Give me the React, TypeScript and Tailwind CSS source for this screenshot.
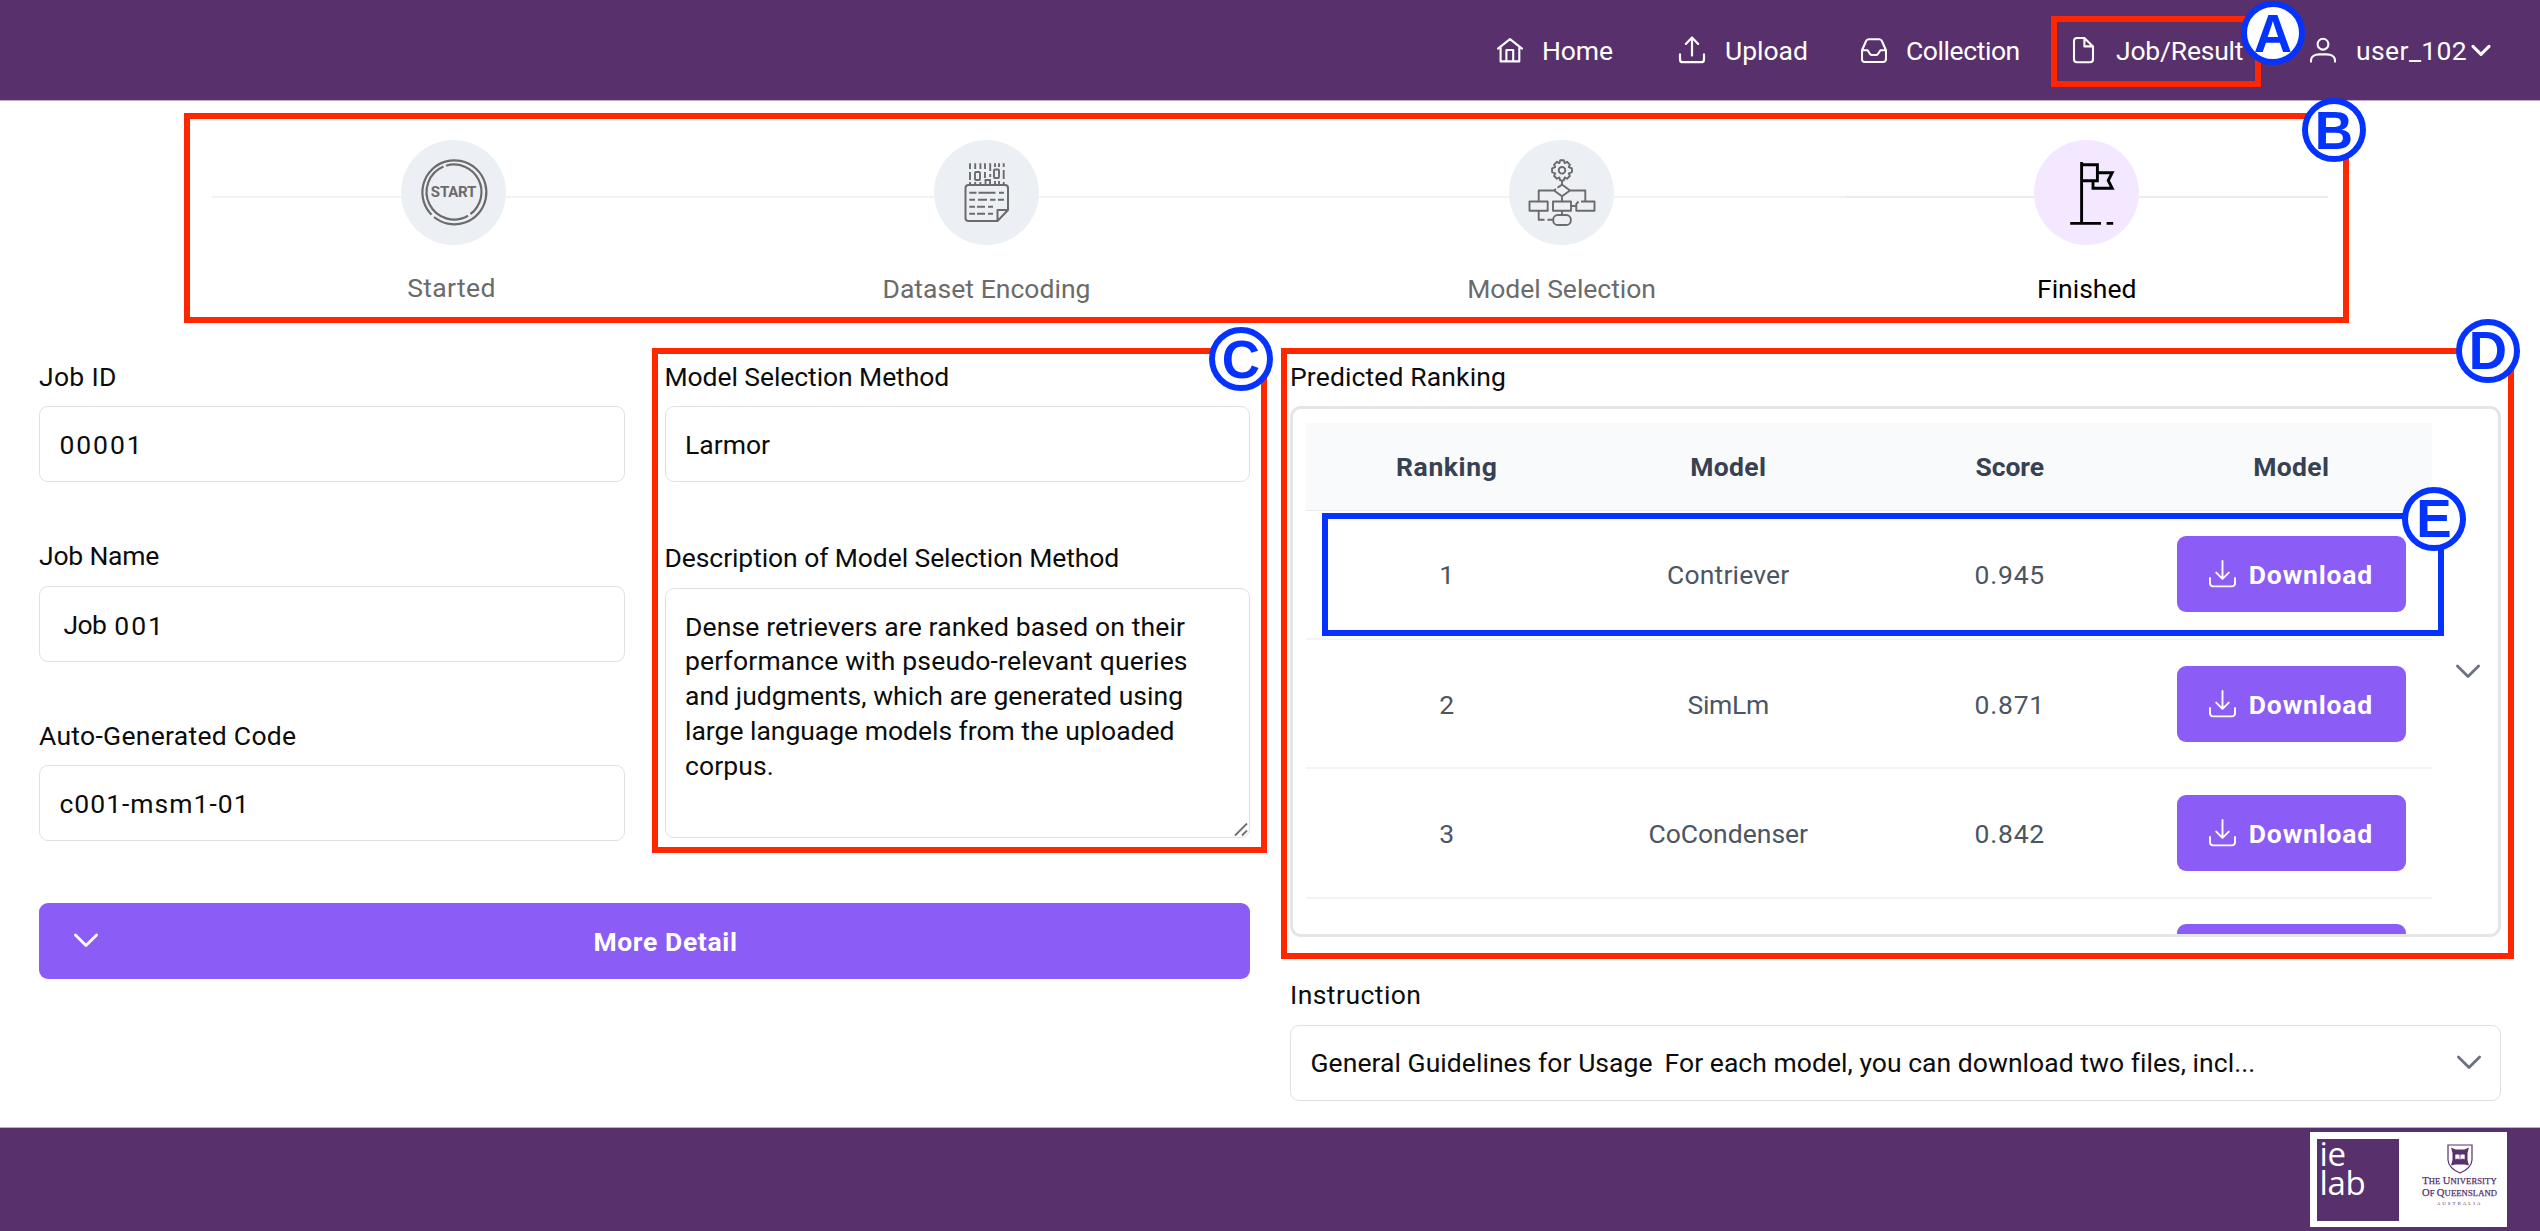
import React from 'react';

/* ---------- icons ---------- */

const HomeIcon = () => (
  <svg className="size-[26px]" viewBox="0 0 26 26" fill="none" stroke="currentColor" strokeWidth="2.1" strokeLinejoin="round" strokeLinecap="round">
    <path d="M1 11.6 13 2.2 25 11.6M3.6 9.8V24.4H22.3V9.8M9.4 24.2V13H16.2V24.2" />
  </svg>
);

const UploadIcon = () => (
  <svg className="size-[26px] overflow-visible" viewBox="0 0 26 26" fill="none" stroke="currentColor" strokeWidth="2.2" strokeLinejoin="round" strokeLinecap="round">
    <path d="M13 18.6V.6M6.8 6.9 13 .6 19.2 6.9M1 17.4V22.4A2.8 2.8 0 0 0 3.8 25.2H22.2A2.8 2.8 0 0 0 25 22.4V17.4" />
  </svg>
);

const InboxIcon = () => (
  <svg className="size-[26px]" viewBox="0 0 26 26" fill="none" stroke="currentColor" strokeWidth="2.1" strokeLinejoin="round" strokeLinecap="round">
    <path d="M1 13.2 5 4.2Q5.8 2.2 7.8 2.2H18.2Q20.2 2.2 21 4.2L25 13.2V22Q25 25 22 25H4Q1 25 1 22ZM1 13.2H6.6L9.2 17.2Q9.8 18 10.8 18H15.2Q16.2 18 16.8 17.2L19.4 13.2H25" />
  </svg>
);

const FileIcon = () => (
  <svg className="size-[26px] overflow-visible" viewBox="0 0 26 26" fill="none" stroke="currentColor" strokeWidth="2.1" strokeLinejoin="round" strokeLinecap="round">
    <path d="M14.4 1H7Q4 1 4 4V22.2Q4 25.2 7 25.2H20Q23 25.2 23 22.2V9.4ZM14.4 1V9.4H23" />
  </svg>
);

const UserIcon = () => (
  <svg className="size-[26px]" viewBox="0 0 26 26" fill="none" stroke="currentColor" strokeWidth="2.1" strokeLinejoin="round" strokeLinecap="round">
    <circle cx="13" cy="7.2" r="5.4" />
    <path d="M1 24.6V23.4C1 19.4 4.8 17.4 9.4 17.4H16.6C21.2 17.4 25 19.4 25 23.4V24.6" />
  </svg>
);

const DownloadIcon = () => (
  <svg className="h-[28px] w-[27px] shrink-0" viewBox="0 0 27 28" fill="none" stroke="currentColor" strokeWidth="1.9" strokeLinejoin="round" strokeLinecap="round">
    <path d="M13.5 1V18.6M7.2 12.6 13.5 18.9 19.8 12.6M1 18V23.4A3 3 0 0 0 4 26.4H23A3 3 0 0 0 26 23.4V18" />
  </svg>
);

const Chevron = () => (
  <svg className="h-[15px] w-[26px]" viewBox="0 0 26 15" fill="none" stroke="currentColor" strokeWidth="2.8" strokeLinejoin="round" strokeLinecap="round">
    <path d="M2.4 2 13 12.600 23.600 2" />
  </svg>
);

const StartIcon = () => (
  <span className="relative flex size-[70px] items-center justify-center">
    <svg className="absolute inset-0" viewBox="-35 -35 70 70" fill="none" stroke="currentColor" strokeWidth="2.2">
      <path d="M-22.5 22.7A32 32 0 1 1 -20 25" />
      <path d="M-8 -26.3A27.5 27.5 0 0 1 16.5 22M14 23.7A27.5 27.5 0 1 1 -10.5 -25.4" />
    </svg>
    <span className="text-[15px] leading-none font-bold tracking-[-0.2px]">START</span>
  </span>
);

const DatasetIcon = () => (
  <svg className="size-[70px]" viewBox="-35 -35 70 70" fill="none" stroke="currentColor" strokeWidth="2">
    <path d="M10.5 29H-18.5Q-21.5 29 -21.5 26V-4Q-21.5 -7 -18.5 -7H18Q21 -7 21 -4V18ZM10.5 29V18H21" strokeLinejoin="round" />
    <path d="M-17.7 .7H-10.5M-8.5 .7H8.5M12 .7H17M-17.7 7.7H-12M-9 7.7H0M3 7.7H8.5M11 7.7H17M-17.7 14.7H-12M-10 14.7H-2M1 14.7H6M-17.7 21.7H-12M-10 21.7H-2M1 21.7H6" />
    <path d="M-17 -28.7V-23M-11.8 -28.7V-23M-6.6 -28.7V-23M-2 -28.7V-23M3.2 -28.7V-21M8 -28.7V-25M12 -28.7V-25M16.7 -28.7V-25M-17 -20V-12M-2 -20V-14M3.2 -18V-15M16.7 -22V-13M-17 -10V-7M-11.8 -10V-7M-6.6 -10V-7M8 -11V-7M12 -11V-7M16.7 -10V-7" strokeWidth="1.9" />
    <rect x="-12" y="-20" width="5" height="8" rx="1" strokeWidth="1.9" />
    <rect x="7" y="-22.5" width="5" height="8.5" rx="1" strokeWidth="1.9" />
    <path d="M-1.5 -7V-12H3V-7" strokeWidth="1.9" />
  </svg>
);

const ModelIcon = () => (
  <svg className="size-[70px]" viewBox="-35 -35 70 70" fill="none" stroke="currentColor" strokeWidth="1.9" strokeLinejoin="round">
    <path d="M-1.8 -31.8H1.8L2.6 -28.9 5 -30.2 7.9 -27.4 6.8 -24.8 9.9 -23.6V-19.8L6.8 -18.7 7.9 -16 5 -13.2 2.6 -14.6 1.8 -11.6H-1.8L-2.6 -14.6 -5 -13.2 -7.9 -16 -6.8 -18.7 -9.9 -19.8V-23.6L-6.8 -24.8 -7.9 -27.4 -5 -30.2 -2.6 -28.9Z" />
    <circle cx="0" cy="-21.7" r="3.3" />
    <path d="M0 -11.6V-6.6M-4.5 -4.3 0 -7.4 8 -1.5 0 4.3 -8 -1.5 -6 -3M-8 -1.5H-23.3V9.5M8 -1.5H23.3V9.5M0 4.3V9.5M0 18.7V23M9 14H14M-23.3 18.7V27.8H-17.5M-14.5 27.8H-9" />
    <rect x="-32.5" y="9.5" width="18.2" height="9.2" />
    <rect x="-9" y="9.5" width="18" height="9.2" />
    <path d="M19 9.5H32.5V18.7H14.3V12L16.5 9.5" />
    <rect x="-8.8" y="23" width="17.6" height="10" rx="4.6" />
  </svg>
);

const FlagIcon = () => (
  <svg className="size-[70px]" viewBox="-35 -35 70 70" fill="none" stroke="currentColor" strokeWidth="2.9">
    <path d="M-5.4 -30V31.4M-16.8 31.4H14M19.6 31.4H26.2M-5.4 -27.3H10.4V-11.3H-5.4M10.4 -19.3H25.2L21.2 -11.5 25.2 -3.7H6V-11.3" />
  </svg>
);

/* ---------- data ---------- */

const steps = [
  { label: 'Started', icon: <StartIcon />, width: 'w-[484px]', text: 'tracking-[0.35px] -translate-y-px -translate-x-[2px]' },
  { label: 'Dataset Encoding', icon: <DatasetIcon />, width: 'w-[582px]', text: 'tracking-[0.04px]' },
  { label: 'Model Selection', icon: <ModelIcon />, width: 'w-[568px]', text: 'tracking-[-0.04px]' },
  { label: 'Finished', icon: <FlagIcon />, width: 'w-[482.5px]', text: '', active: true },
];

const rows = [
  { rank: '1', model: 'Contriever', score: '0.945', tracking: 'tracking-[0.19px]' },
  { rank: '2', model: 'SimLm', score: '0.871', tracking: 'tracking-[-0.3px]' },
  { rank: '3', model: 'CoCondenser', score: '0.842', tracking: 'tracking-normal' },
  { rank: '4', model: '', score: '', tracking: '' },
];

/* ---------- building blocks ---------- */

const fieldBox = 'h-[76px] rounded-[9px] border-[1.5px] border-[#e0e1e3] bg-white flex items-center';

function Label({ children, className = '' }: { children: React.ReactNode; className?: string }) {
  return <div className={`h-[35px] leading-[33px] whitespace-nowrap ${className}`}>{children}</div>;
}

function Field({ label, labelClass, children }: { label: string; labelClass?: string; children: React.ReactNode }) {
  return (
    <div>
      <Label className={labelClass}>{label}</Label>
      <div className={`${fieldBox} mt-[11.5px] px-[19.5px]`}>{children}</div>
    </div>
  );
}

function Circle({ letter, className }: { letter: string; className: string }) {
  return (
    <div className={`absolute flex size-[64px] items-center justify-center rounded-full border-6 border-[#0433ff] bg-white font-['Liberation_Sans',sans-serif] text-[53px] leading-none font-bold text-[#0433ff] ${className}`}>
      <span>{letter}</span>
    </div>
  );
}

function NavItem({ icon, className, children }: { icon: React.ReactNode; className: string; children: React.ReactNode }) {
  return (
    <div className={`flex shrink-0 items-center ${className}`}>
      <span className="mr-[19px] shrink-0">{icon}</span>
      {children}
    </div>
  );
}

function Header() {
  return (
    <header className="flex h-[101px] items-center border-b border-[#bfadc9] bg-[#57306c] pl-[1497px] text-white">
      <NavItem icon={<HomeIcon />} className="w-[182px]"><span className="tracking-[-0.1px]">Home</span></NavItem>
      <NavItem icon={<UploadIcon />} className="w-[182px]"><span className="pl-px">Upload</span></NavItem>
      <NavItem icon={<InboxIcon />} className="w-[209px]"><span className="tracking-[-0.42px]">Collection</span></NavItem>
      <NavItem icon={<FileIcon />} className="w-[240px]"><span className="pl-px tracking-[-0.2px]">Job/Result</span></NavItem>
      <NavItem icon={<UserIcon />} className="">
        <span className="pl-px tracking-[0.4px]">user_102</span>
        <svg className="ml-[4px] h-[13px] w-[20px]" viewBox="0 0 20 13" fill="none" stroke="currentColor" strokeWidth="3" strokeLinecap="round" strokeLinejoin="round">
          <path d="M2 2.4 10 10.4 18 2.4" />
        </svg>
      </NavItem>
    </header>
  );
}

function Stepper() {
  return (
    <ol className="flex h-[258.5px] pt-[38.5px] pl-[211.5px]">
      {steps.map((s) => (
        <li key={s.label} className={`flex flex-col items-center ${s.width} ${s.active ? 'text-black' : 'text-[#6b6b6b]'}`}>
          <div className="flex w-full items-center">
            <span className={`mt-[9px] h-[2px] flex-1 ${s.active ? 'bg-[#ececec]' : 'bg-[#f2f2f2]'}`} />
            <span className={`flex size-[105px] items-center justify-center rounded-full ${s.active ? 'bg-[#f3e8ff]' : 'bg-[#ecf0f5]'}`}>{s.icon}</span>
            <span className={`mt-[9px] h-[2px] flex-1 ${s.active ? 'bg-[#ececec]' : 'bg-[#f2f2f2]'}`} />
          </div>
          <span className={`mt-[26.5px] leading-[35px] ${s.text}`}>{s.label}</span>
        </li>
      ))}
    </ol>
  );
}

function RankingTable() {
  return (
    <div className="mt-[11.5px] flex h-[531px] overflow-hidden rounded-[11px] border-3 border-[#e5e5e5] pl-[13px]">
      <div className="w-[1126px] shrink-0 pt-[13.5px] text-center">
        <div className="grid h-[88.3px] grid-cols-4 items-center border-b-[1.5px] border-[#e9ebee] bg-[#f9fafb] font-bold text-[#374151]">
          <span className="tracking-[0.6px]">Ranking</span>
          <span className="tracking-[0.35px]">Model</span>
          <span className="tracking-[-0.08px]">Score</span>
          <span className="tracking-[0.35px]">Model</span>
        </div>
        {rows.map((r) => (
          <div key={r.rank} className="grid h-[129.3px] grid-cols-4 items-center border-b-2 border-[#f3f4f6] text-[#4b5563]">
            <span className="pt-px">{r.model ? r.rank : ''}</span>
            <span className={`pt-px ${r.tracking}`}>{r.model}</span>
            <span className="pt-px tracking-[0.8px]">{r.score}</span>
            <button className="mx-auto flex h-[76px] w-[229px] items-center rounded-[9px] bg-[#8b5cf6] pl-[32.5px] font-bold text-white">
              <DownloadIcon />
              <span className="ml-[12.5px] pt-px tracking-[0.85px]">{r.model ? 'Download' : ''}</span>
            </button>
          </div>
        ))}
      </div>
      <div className="flex flex-1 items-center justify-end pr-[17px] text-[#6b7280]"><Chevron /></div>
    </div>
  );
}

/* Shield of the university with an open book on a cross */
const Shield = () => (
  <svg className="h-[30px] w-[26px]" viewBox="0 0 26 30" fill="none" stroke="#57306c">
    <path d="M1 1H25V16Q24.5 24 13 29Q1.500 24 1 16Z" strokeWidth="1.2" fill="#fff" />
    <path d="M4 3.500 8.500 5.500H17.500L22 3.500 20.500 9V16L22 21.500 17.500 20.500H8.500L4 21.500 5.500 16V9Z" fill="#57306c" stroke="none" />
    <path d="M8 10.500Q10.500 9.500 13 10.800Q15.500 9.500 18 10.500V15.500Q15.500 14.500 13 15.700Q10.500 14.500 8 15.500Z" fill="#fff" strokeWidth=".6" />
    <path d="M13 11V15.500" strokeWidth=".8" />
  </svg>
);

function Footer() {
  return (
    <footer className="flex h-[104px] justify-end border-t border-[#bfadc9] bg-[#57306c] pt-[4px] pr-[33px]">
      <div className="flex h-[95px] w-[197px] items-start bg-white pt-[6.5px] pl-[6.5px]">
        <div className="h-[82px] w-[82px] bg-[#57306c] pl-[3px] font-['Open_Sans',sans-serif] text-[33px] leading-[29px] font-medium text-white">
          <div className="tracking-[-0.3px]">ie</div>
          <div className="tracking-[-0.3px]">lab</div>
        </div>
        <div className="ml-[18px] flex w-[86px] flex-col items-center pt-[5px] font-['Liberation_Serif',serif] whitespace-nowrap text-[#57306c]">
          <Shield />
          <div className="mt-[1px] text-[8.6px] leading-[11px] tracking-[0.1px] [-webkit-text-stroke:0.25px_currentColor]"><span className="text-[10.6px]">T</span>HE <span className="text-[10.6px]">U</span>NIVERSITY</div>
          <div className="text-[8.6px] leading-[11px] tracking-[0.1px] [-webkit-text-stroke:0.25px_currentColor]"><span className="text-[10.6px]">O</span>F <span className="text-[10.6px]">Q</span>UEENSLAND</div>
          <div className="text-[5px] leading-[9px] tracking-[1.9px]">AUSTRALIA</div>
        </div>
      </div>
    </footer>
  );
}

export default function App() {
  return (
    <div className="relative flex h-[1231px] w-[2540px] flex-col overflow-hidden bg-white font-[Roboto,sans-serif] text-[26.5px] leading-[35px] text-[#0c0c0c]">
      <Header />

      <main className="h-[1026px]">
        <Stepper />

        <div className="grid grid-cols-[1211px_1211px] gap-x-[40px] pl-[39px]">
          <div>
            <div className="grid grid-cols-2 gap-x-[40px]">
              <div className="flex flex-col gap-[57px]">
                <Field label="Job ID" labelClass="tracking-[0.3px]"><span className="pt-px tracking-[1.9px]">00001</span></Field>
                <Field label="Job Name" labelClass="tracking-[-0.2px]">
                  <span className="pt-[2px] pl-[4px] tracking-[-0.6px]">Job</span>
                  <span className="pt-[4px] pl-[8px] tracking-[2px]">001</span>
                </Field>
                <Field label="Auto-Generated Code" labelClass="tracking-[0.29px]"><span className="pt-px tracking-[1px]">c001-msm1-01</span></Field>
              </div>
              <div>
                <Field label="Model Selection Method" labelClass="tracking-[-0.08px]"><span className="pt-px">Larmor</span></Field>
                <Label className="mt-[59px] tracking-[-0.09px]">Description of Model Selection Method</Label>
                <div className="relative mt-[12px] h-[250px] rounded-[9px] border-[1.5px] border-[#e0e1e3] bg-white px-[19.5px] pt-[20.500px] leading-[34.8px] whitespace-nowrap">
                  <div className="tracking-[0.13px]">Dense retrievers are ranked based on their</div>
                  <div className="tracking-[0.17px]">performance with pseudo-relevant queries</div>
                  <div className="tracking-[0.05px]">and judgments, which are generated using</div>
                  <div className="tracking-[-0.02px]">large language models from the uploaded</div>
                  <div className="tracking-[0.11px]">corpus.</div>
                  <svg className="absolute right-0 bottom-0 size-[15px]" viewBox="0 0 15 15" stroke="#6f6f6f" strokeWidth="1.8">
                    <path d="M1 13.500 13 1.500M8 13.500 13 8.500" />
                  </svg>
                </div>
              </div>
            </div>
            <button className="mt-[61.500px] flex h-[76px] w-full items-center rounded-[9px] bg-[#8b5cf6] pl-[34px] font-bold text-white">
              <Chevron />
              <span className="flex-1 pt-px pr-[18px] text-center tracking-[0.62px]">More Detail</span>
            </button>
          </div>

          <div>
            <Label className="tracking-[0.13px]">Predicted Ranking</Label>
            <RankingTable />
            <Label className="mt-[41px] tracking-[0.45px]">Instruction</Label>
            <div className={`${fieldBox} mt-[11.5px] pr-[18px] pl-[19.500px] whitespace-nowrap`}>
              <span className="tracking-[0.05px]">General Guidelines for Usage</span>
              <span className="flex-1 pl-[12px] tracking-[0.04px]">For each model, you can download two files, incl...</span>
              <span className="text-[#6b7280]"><Chevron /></span>
            </div>
          </div>
        </div>
      </main>

      <Footer />

      {/* annotation overlay */}
      <div className="absolute top-[16px] left-[2051px] h-[71px] w-[210px] border-6 border-[#ff2600]" />
      <div className="absolute top-[113px] left-[184px] h-[210px] w-[2165px] border-6 border-[#ff2600]" />
      <div className="absolute top-[348px] left-[652px] h-[505px] w-[615px] border-6 border-[#ff2600]" />
      <div className="absolute top-[348px] left-[1281px] h-[611px] w-[1233px] border-6 border-[#ff2600]" />
      <div className="absolute top-[513px] left-[1322px] h-[123px] w-[1122px] border-6 border-[#0433ff]" />
      <Circle letter="A" className="top-[1px] left-[2241px]" />
      <Circle letter="B" className="top-[98px] left-[2302px]" />
      <Circle letter="C" className="top-[327px] left-[1209px]" />
      <Circle letter="D" className="top-[318.500px] left-[2456px]" />
      <Circle letter="E" className="top-[486.500px] left-[2402px]" />
    </div>
  );
}
